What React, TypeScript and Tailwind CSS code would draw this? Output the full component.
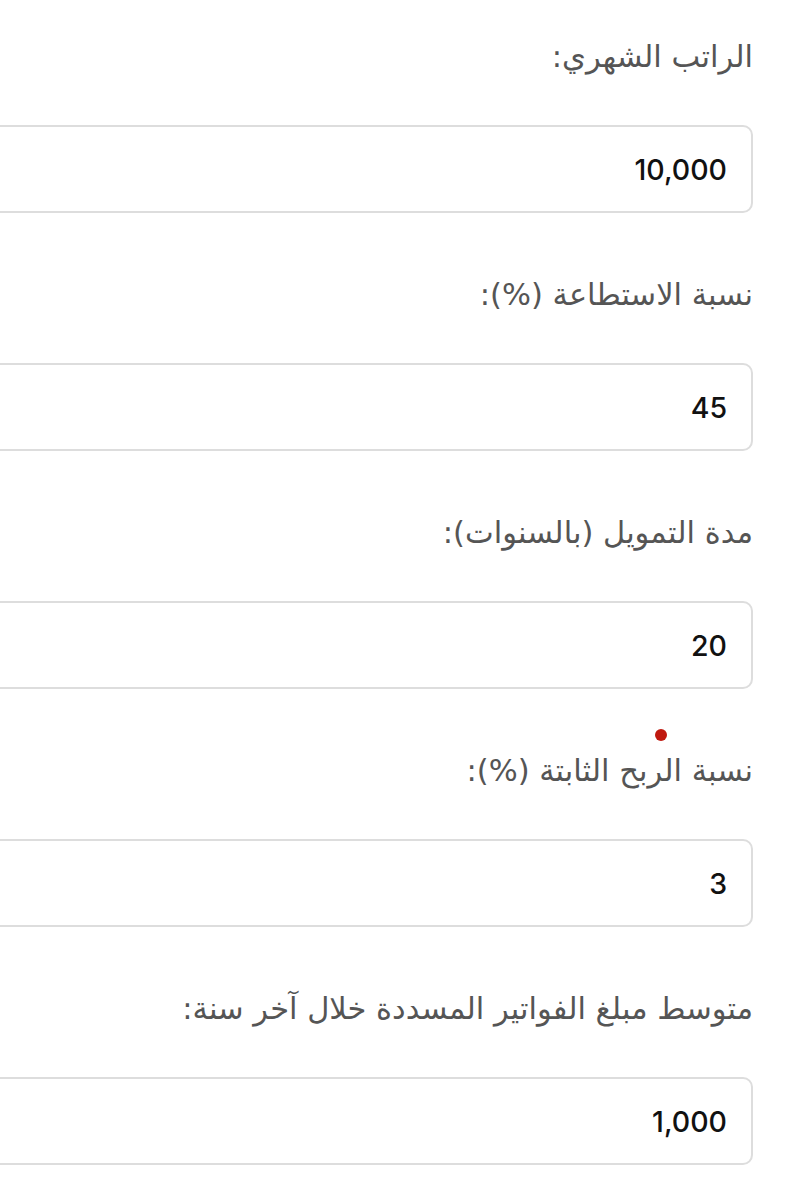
const fields = [
  { label: 'الراتب الشهري:', value: '10,000' },
  { label: 'نسبة الاستطاعة (%):', value: '45' },
  { label: 'مدة التمويل (بالسنوات):', value: '20' },
  { label: 'نسبة الربح الثابتة (%):', value: '3' },
  { label: 'متوسط مبلغ الفواتير المسددة خلال آخر سنة:', value: '1,000' },
]

export default function App() {
  return (
    <div className="relative w-[797px] min-h-[1200px] overflow-hidden bg-white">
      <form dir="rtl" className="flex flex-col pr-[44px] pt-[37px]">
        {fields.map((f) => (
          <div key={f.label} className="mb-[62px] flex flex-col">
            <label className="text-[30.5px] leading-[40px] text-[#555555] font-['DejaVu_Sans',sans-serif]">
              {f.label}
            </label>
            <input
              readOnly
              value={f.value}
              className="mt-[48px] ml-[-40px] h-[88px] rounded-[10px] border-2 border-[#dddddd] bg-white px-[24px] text-right text-[28.5px] font-medium text-[#111111] outline-none font-['Inter',sans-serif]"
            />
          </div>
        ))}
      </form>
      <span className="absolute left-[655px] top-[729px] h-[12px] w-[12px] rounded-full bg-[#c0190f]" />
    </div>
  )
}
